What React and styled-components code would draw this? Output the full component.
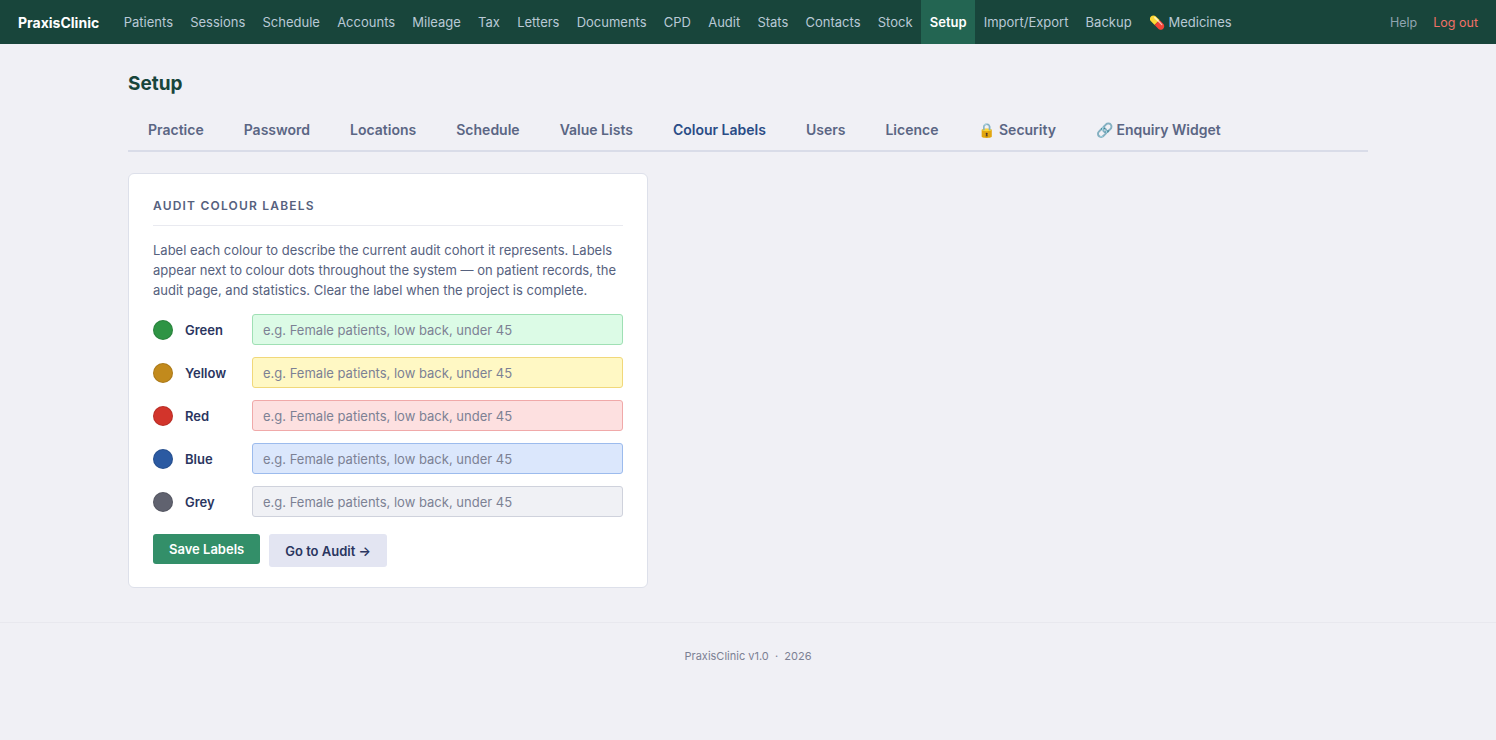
import React from "react";
import styled, { createGlobalStyle } from "styled-components";

const Global = createGlobalStyle`
  body { margin: 0; background: #f0f0f5; font-family: Inter, "Noto Sans", sans-serif; }
`;
const Nav = styled.nav`
  height: 44px; background: #18453b; display: flex; align-items: stretch; padding: 0 10px 0 18px;
`;
const Brand = styled.div`
  color: #fff; font-weight: 700; font-size: 14px; display: flex; align-items: center; margin-right: 16px;
`;
const NavItem = styled.a`
  display: flex; align-items: center; gap: 5px; padding: 0 8.6px; font-size: 13px;
  color: ${p => (p.$active ? "#fff" : "#b9c9d6")};
  background: ${p => (p.$active ? "#236552" : "transparent")};
  font-weight: ${p => (p.$active ? 600 : 400)};
`;
const Spacer = styled.div`flex: 1;`;
const Right = styled.a`
  display: flex; align-items: center; padding: 0 8px; font-size: 12.5px; color: ${p => p.$c};
`;
const Main = styled.main`
  width: 1240px; margin: 0 auto; padding: 28px 0 34px;
`;
const Title = styled.h1`
  font-size: 19px; font-weight: 700; color: #18453b; margin: 0 0 26px;
`;
const Tabs = styled.div`
  display: flex; border-bottom: 2px solid #d9dce8; margin-bottom: 21px;
`;
const Tab = styled.div`
  padding: 0 20px 12px; font-size: 14px; font-weight: 600;
  color: ${p => (p.$active ? "#2a4c86" : "#5b6684")};
  display: flex; gap: 4px; align-items: center;
`;
const Card = styled.section`
  width: 520px; box-sizing: border-box; background: #fff; border: 1px solid #dde0ea;
  border-radius: 6px; padding: 24px 24px 20px;
`;
const CardTitle = styled.h2`
  margin: 0 0 14px; padding-bottom: 12px; border-bottom: 1px solid #e9eaf0;
  font-size: 12px; font-weight: 600; letter-spacing: 1.2px; color: #56617e;
`;
const Desc = styled.p`
  margin: 0 0 14px; font-size: 13px; line-height: 20px; color: #56617e;
`;
const Row = styled.div`
  display: flex; align-items: center; margin-bottom: 12px;
`;
const Dot = styled.span`
  width: 20px; height: 20px; border-radius: 50%; background: ${p => p.$c}; margin-right: 12px;
  box-shadow: inset 0 0 0 1px rgba(0,0,0,0.12);
`;
const Name = styled.span`
  width: 67px; font-size: 13px; font-weight: 600; color: #2a3560;
`;
const Input = styled.input`
  flex: 1; height: 31px; box-sizing: border-box; border-radius: 3px; padding: 0 10px;
  font: 13px Inter, sans-serif; background: ${p => p.$bg}; border: 1px solid ${p => p.$bd}; outline: none;
  &::placeholder { color: #7c8194; }
`;
const Buttons = styled.div`display: flex; gap: 9px; margin-top: 17px;`;
const Btn = styled.button`
  height: ${p => (p.$primary ? "30px" : "33px")}; padding: 0 16px; border: none; border-radius: 3px;
  font: 600 13px Inter, sans-serif;
  background: ${p => (p.$primary ? "#338f69" : "#e3e5f2")};
  color: ${p => (p.$primary ? "#fff" : "#2a3560")};
`;
const Footer = styled.footer`
  border-top: 1px solid #e8e8ee; text-align: center; padding: 26px 0 60px; font-size: 11px; color: #7c8194;
`;

const navItems = ["Patients","Sessions","Schedule","Accounts","Mileage","Tax","Letters","Documents","CPD","Audit","Stats","Contacts","Stock","Setup","Import/Export","Backup"];
const tabs = ["Practice","Password","Locations","Schedule","Value Lists","Colour Labels","Users","Licence","🔒 Security","🔗 Enquiry Widget"];
const colours = [
  ["Green","#2e9444","#dcfbe6","#9fe0b4"],
  ["Yellow","#c28a1c","#fff8c4","#f1d87a"],
  ["Red","#d2342b","#fde0e0","#f0a9a9"],
  ["Blue","#2b5aa2","#dbe7fc","#9cbbed"],
  ["Grey","#60626f","#f0f1f5","#cfd2dc"],
];

export default function App() {
  return (
    <>
      <Global />
      <Nav>
        <Brand>PraxisClinic</Brand>
        {navItems.map(n => <NavItem key={n} $active={n === "Setup"}>{n}</NavItem>)}
        <NavItem>💊 Medicines</NavItem>
        <Spacer />
        <Right $c="#8fa4b0">Help</Right>
        <Right $c="#f07167">Log out</Right>
      </Nav>
      <Main>
        <Title>Setup</Title>
        <Tabs>{tabs.map(t => <Tab key={t} $active={t === "Colour Labels"}>{t}</Tab>)}</Tabs>
        <Card>
          <CardTitle>AUDIT COLOUR LABELS</CardTitle>
          <Desc>Label each colour to describe the current audit cohort it represents. Labels appear next to colour dots throughout the system — on patient records, the audit page, and statistics. Clear the label when the project is complete.</Desc>
          {colours.map(([n,c,bg,bd]) => (
            <Row key={n}>
              <Dot $c={c} /><Name>{n}</Name>
              <Input $bg={bg} $bd={bd} placeholder="e.g. Female patients, low back, under 45" />
            </Row>
          ))}
          <Buttons>
            <Btn $primary>Save Labels</Btn>
            <Btn>Go to Audit →</Btn>
          </Buttons>
        </Card>
      </Main>
      <Footer>PraxisClinic v1.0 &nbsp;·&nbsp; 2026</Footer>
    </>
  );
}
